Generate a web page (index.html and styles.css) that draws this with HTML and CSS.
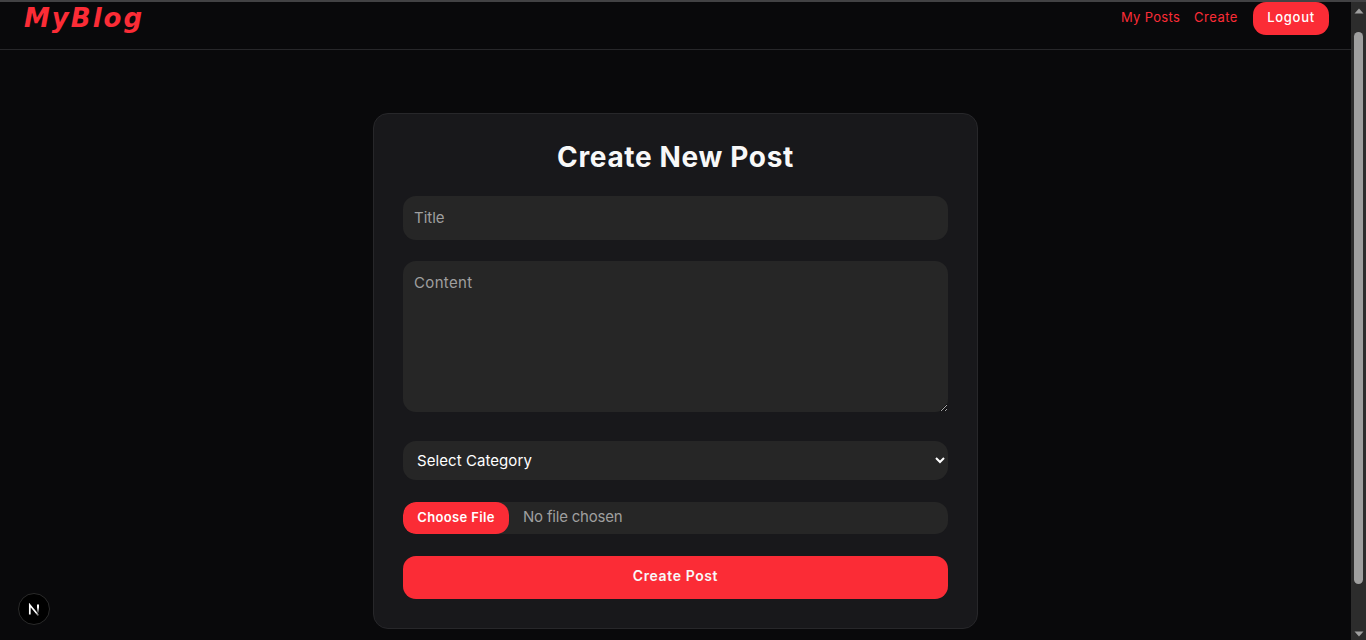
FILE: index.html
```html
<!DOCTYPE html>
<html lang="en">
<head>
<meta charset="utf-8">
<title>MyBlog</title>
<link rel="stylesheet" href="styles.css">
</head>
<body>
<div class="window">
  <div class="page">
    <header class="navbar">
      <a class="logo">MyBlog</a>
      <nav class="links">
        <a class="link posts">My Posts</a>
        <a class="link create">Create</a>
        <button class="logout">Logout</button>
      </nav>
    </header>
    <main class="main">
      <form class="card">
        <h1 class="heading"><span>Create New Post</span></h1>
        <input class="field title" type="text" placeholder="Title">
        <textarea class="field content" placeholder="Content"></textarea>
        <select class="field category"><option>Select Category</option></select>
        <input class="field file" type="file">
        <button class="submit" type="button">Create Post</button>
      </form>
    </main>
  </div>
  <div class="scrollbar">
    <svg class="arrow" width="10" height="6" viewBox="0 0 10 6"><path d="M.5 5.500 5 .5l4.500 5z"/></svg>
    <div class="thumb"></div>
    <svg class="arrow" width="10" height="6" viewBox="0 0 10 6"><path d="M.5.5h9L5 5.500z"/></svg>
  </div>
</div>
<div class="badge">
  <svg width="12" height="13" viewBox="0 0 12 13" fill="none">
    <defs>
      <linearGradient id="stem" x1="0" y1="0" x2="0" y2="1"><stop offset=".3" stop-color="#fff"/><stop offset="1" stop-color="#fff" stop-opacity="0"/></linearGradient>
      <linearGradient id="diag" x1="0" y1="0" x2="1" y2="1"><stop offset=".7" stop-color="#fff"/><stop offset="1" stop-color="#fff" stop-opacity=".3"/></linearGradient>
    </defs>
    <path d="M1.800 11.500V2L10.500 12.500" stroke="url(#diag)" stroke-width="1.700"/>
    <rect x="9" y="1.500" width="2" height="9" fill="url(#stem)"/>
  </svg>
</div>
</body>
</html>
```
FILE: styles.css
```css
* { box-sizing: border-box; }
body {
  margin: 0;
  height: 640px;
  overflow: hidden;
  background: #09090b;
  color: #fff;
  font-family: Inter, "Liberation Sans", sans-serif;
}
.window {
  display: flex;
  height: 640px;
  border-top: 2px solid #424244;
}
.page { flex: 1; }
.navbar {
  display: flex;
  justify-content: space-between;
  align-items: flex-start;
  height: 48px;
  padding: 0 22px 0 24px;
  border-bottom: 1px solid #27272a;
}
.logo {
  color: #fb2c36;
  font: italic bold 26px/33px "DejaVu Sans", sans-serif;
  letter-spacing: 2px;
}
.links { display: flex; align-items: flex-start; }
.link {
  color: #fb2c36;
  font-size: 13px;
  line-height: 31px;
}
.posts { width: 73px; letter-spacing: 0.3px; }
.create { width: 59px; letter-spacing: 0.5px; }
.logout {
  width: 76px;
  height: 33px;
  padding: 0 0 3px;
  border: 0;
  border-radius: 13px;
  background: #fb2c36;
  color: #fff;
  font: 500 13px Inter, sans-serif;
  letter-spacing: 0.7px;
}
.main { padding-top: 63px; }
.card {
  display: flex;
  flex-direction: column;
  width: 605px;
  height: 516px;
  margin: 0 auto;
  padding: 29px;
  border: 1px solid #27272a;
  border-radius: 15px;
  background: #18181b;
}
.heading {
  margin: 0 0 24px;
  height: 29px;
  font-size: 28px;
  line-height: 29px;
  font-weight: 700;
  letter-spacing: 0.65px;
  text-align: center;
  color: #f8f8f8;
}
.field {
  width: 100%;
  border: 0;
  border-radius: 13px;
  outline: 0;
  background: #262626;
  font: 15px/22px Inter, sans-serif;
}
.field::placeholder { color: #9f9f9f; opacity: 1; }
.title {
  height: 44px;
  margin-bottom: 21px;
  padding: 0 11px 2px;
}
.content {
  height: 151px;
  margin-bottom: 29px;
  padding: 11px 11px 10px;
  letter-spacing: 0.35px;
  resize: vertical;
}
.category {
  height: 39px;
  margin-bottom: 22px;
  padding: 0 0 1px 10px;
  color: #fff;
  letter-spacing: 0.07px;
}
.file {
  height: 32px;
  margin-bottom: 22px;
  color: #9f9f9f;
  line-height: 30px;
  letter-spacing: -0.2px;
}
.file::file-selector-button {
  width: 106px;
  height: 32px;
  margin: 0 14px 0 0;
  padding: 0 0 2px;
  border: 0;
  border-radius: 13px;
  background: #fb2c36;
  color: #fff;
  font: 600 13px Inter, sans-serif;
  letter-spacing: 0.35px;
}
.submit {
  height: 43px;
  padding: 0 0 4px;
  border: 0;
  border-radius: 13px;
  background: #fb2c36;
  color: #f8f8f8;
  font: 600 14px Inter, sans-serif;
  letter-spacing: 0.6px;
}
.scrollbar {
  display: flex;
  flex-direction: column;
  align-items: center;
  width: 15px;
  padding: 6px 0 3px;
  background: #2c2c2c;
}
.arrow { fill: #9f9f9f; }
.thumb {
  width: 9px;
  height: 552px;
  margin: 18px 0 auto;
  border-radius: 5px;
  background: #9f9f9f;
}
.badge {
  position: absolute;
  left: 18px;
  top: 593px;
  display: flex;
  align-items: center;
  justify-content: center;
  width: 32px;
  height: 32px;
  border: 1px solid #2a2a2a;
  border-radius: 50%;
  background: #000;
}
```
